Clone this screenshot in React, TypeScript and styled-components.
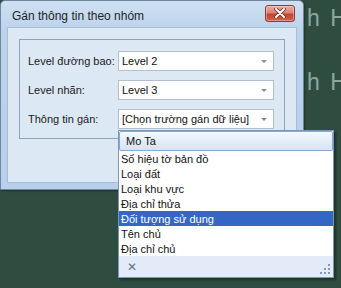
import styled, { createGlobalStyle } from "styled-components";

const GlobalStyle = createGlobalStyle`
  html, body {
    margin: 0;
    padding: 0;
    background: #2f4c40;
    overflow: hidden;
  }
  * {
    box-sizing: border-box;
  }
`;

const Desktop = styled.div`
  position: relative;
  width: 341px;
  height: 288px;
  background: #2f4c40;
  font-family: "Liberation Sans", Arial, sans-serif;
  overflow: hidden;
`;

const Backdrop = styled.div`
  display: flex;
  flex-direction: column;
  padding: 6px 0 0 307px;
  gap: 40px;
`;

const BackdropLine = styled.div`
  font-size: 23px;
  line-height: 24px;
  color: #8ea79a;
  white-space: nowrap;
  letter-spacing: 1px;
  word-spacing: 2px;
`;

const Window = styled.div`
  position: absolute;
  left: 0;
  top: 0;
  width: 304px;
  height: 190px;
  display: flex;
  flex-direction: column;
  border: 1px solid #6f86a0;
  border-radius: 5px 5px 0 0;
  background: linear-gradient(#cfe0f2, #bcd3ec 30px, #b8d0ea);
  box-shadow: 1px 1px 2px rgba(0, 0, 0, 0.35);
`;

const TitleBar = styled.div`
  height: 26px;
  display: flex;
  align-items: center;
  justify-content: space-between;
  padding: 0 8px 0 11px;
`;

const Title = styled.span`
  font-size: 12px;
  color: #1e1e1e;
  margin-top: 4px;
`;

const CloseButton = styled.div`
  width: 30px;
  height: 17px;
  margin-top: -2px;
  display: flex;
  align-items: center;
  justify-content: center;
  border: 1px solid #8e3b2e;
  border-radius: 3px;
  background: linear-gradient(#eab1a6, #d98373 45%, #c4432f 55%, #d1624c);
  box-shadow: inset 0 0 0 1px rgba(255, 220, 210, 0.45);
`;

const Client = styled.div`
  flex: 1;
  margin: 0 6px 6px 6px;
  background: #dde8f5;
  border: 1px solid #a6bdd6;
  padding: 11px 11px 0 11px;
`;

const GroupBox = styled.div`
  border: 1px solid #8fa2b9;
  padding: 11px 9px 9px 8px;
  display: flex;
  flex-direction: column;
  gap: 9px;
`;

const Row = styled.div`
  display: flex;
  align-items: center;
  height: 20px;
`;

const Label = styled.span`
  width: 90px;
  font-size: 11px;
  color: #1a1a1a;
`;

const ComboWrap = styled.div`
  position: relative;
  width: 156px;
`;

const Combo = styled.div`
  height: 20px;
  display: flex;
  align-items: center;
  justify-content: space-between;
  border: 1px solid #b3bfcd;
  background: #ffffff;
  padding: 0 6px 0 3px;
  font-size: 11px;
  color: #111;
`;

const Arrow = styled.span`
  width: 0;
  height: 0;
  border-left: 3px solid transparent;
  border-right: 3px solid transparent;
  border-top: 3px solid #8a8f96;
`;

const DropList = styled.div`
  position: absolute;
  left: 0;
  top: 21px;
  width: 216px;
  border: 1px solid #7b98b8;
  background: #ffffff;
  box-shadow: 2px 2px 2px rgba(0, 0, 0, 0.35);
  z-index: 2;
`;

const HotItem = styled.div`
  height: 20px;
  display: flex;
  align-items: center;
  padding-left: 6px;
  border: 1px solid #87a8d3;
  border-radius: 2px;
  background: linear-gradient(#f5f9fd, #e2ecf8 55%, #d6e4f5);
  font-size: 11px;
  color: #111;
`;

const Item = styled.div<{ $selected?: boolean }>`
  height: 15px;
  display: flex;
  align-items: center;
  padding-left: 2px;
  font-size: 11px;
  color: ${(p) => (p.$selected ? "#ffffff" : "#111111")};
  background: ${(p) => (p.$selected ? "#3268c4" : "transparent")};
`;

const Footer = styled.div`
  height: 21px;
  display: flex;
  align-items: center;
  justify-content: space-between;
  padding: 0 2px 0 8px;
  background: #e2ebf7;
`;

const ClearMark = styled.span`
  font-size: 12px;
  color: #60738f;
`;

const items = [
  "Số hiệu tờ bản đồ",
  "Loại đất",
  "Loại khu vực",
  "Địa chỉ thửa",
  "Đối tượng sử dụng",
  "Tên chủ",
  "Địa chỉ chủ",
];

const Grip = () => (
  <svg width="12" height="12" viewBox="0 0 12 12" style={{ alignSelf: "flex-end", marginBottom: 2 }}>
    {[
      [9, 1],
      [5, 5],
      [9, 5],
      [1, 9],
      [5, 9],
      [9, 9],
    ].map(([x, y]) => (
      <rect key={`${x}-${y}`} x={x} y={y} width="2" height="2" fill="#8798b0" />
    ))}
  </svg>
);

export default function App() {
  return (
    <Desktop>
      <GlobalStyle />
      <Backdrop>
        <BackdropLine>h H</BackdropLine>
        <BackdropLine>h H</BackdropLine>
      </Backdrop>
      <Window>
        <TitleBar>
          <Title>Gán thông tin theo nhóm</Title>
          <CloseButton>
            <svg width="12" height="10" viewBox="0 0 12 10">
              <path d="M2 1 L10 9 M10 1 L2 9" stroke="#6b2a20" strokeWidth="3.6" strokeLinecap="round" />
              <path d="M2 1 L10 9 M10 1 L2 9" stroke="#ffffff" strokeWidth="2" strokeLinecap="round" />
            </svg>
          </CloseButton>
        </TitleBar>
        <Client>
          <GroupBox>
            <Row>
              <Label>Level đường bao:</Label>
              <ComboWrap>
                <Combo>
                  Level 2
                  <Arrow />
                </Combo>
              </ComboWrap>
            </Row>
            <Row>
              <Label>Level nhãn:</Label>
              <ComboWrap>
                <Combo>
                  Level 3
                  <Arrow />
                </Combo>
              </ComboWrap>
            </Row>
            <Row>
              <Label>Thông tin gán:</Label>
              <ComboWrap>
                <Combo>
                  [Chọn trường gán dữ liệu]
                  <Arrow />
                </Combo>
                <DropList>
                  <HotItem>Mo Ta</HotItem>
                  {items.map((it) => (
                    <Item key={it} $selected={it === "Đối tượng sử dụng"}>
                      {it}
                    </Item>
                  ))}
                  <Footer>
                    <ClearMark>✕</ClearMark>
                    <Grip />
                  </Footer>
                </DropList>
              </ComboWrap>
            </Row>
          </GroupBox>
        </Client>
      </Window>
    </Desktop>
  );
}
